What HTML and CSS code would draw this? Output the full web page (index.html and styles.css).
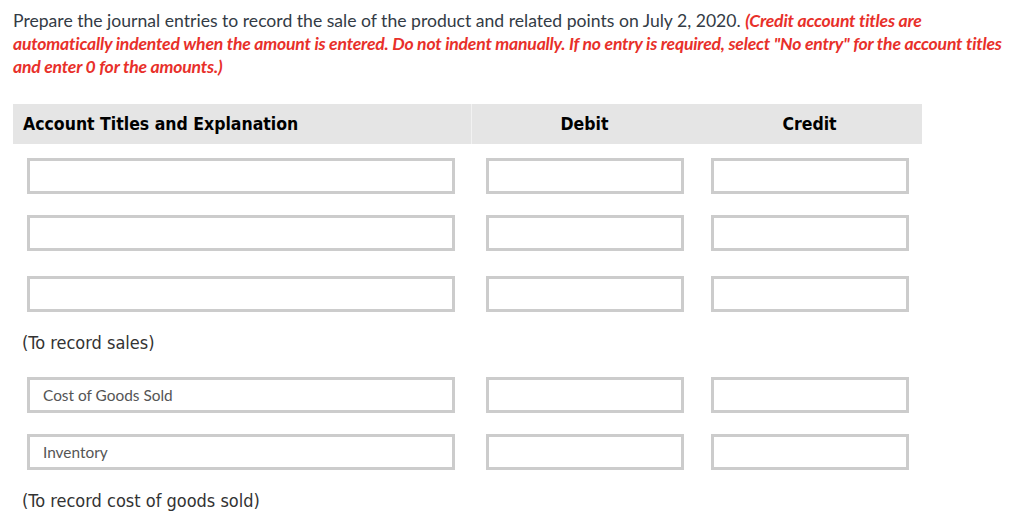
FILE: index.html
```html
<!DOCTYPE html>
<html>
<head>
<meta charset="utf-8">
<link rel="stylesheet" href="styles.css">
</head>
<body>
<div class="page">
  <p class="prompt">Prepare the journal entries to record the sale of the product and related points on July 2, 2020. <span class="note">(Credit account titles are automatically indented when the amount is entered. Do not indent manually. If no entry is required, select "No entry" for the account titles and enter 0 for the amounts.)</span></p>

  <div class="journal">
    <div class="head">
      <div class="hcell hcell-title">Account Titles and Explanation</div>
      <div class="hcell hcell-num">Debit</div>
      <div class="hcell hcell-num">Credit</div>
    </div>

    <div class="row row-1">
      <div class="cell"><div class="field field-title"></div></div>
      <div class="cell"><div class="field field-num"></div></div>
      <div class="cell"><div class="field field-num"></div></div>
    </div>
    <div class="row row-2">
      <div class="cell"><div class="field field-title"></div></div>
      <div class="cell"><div class="field field-num"></div></div>
      <div class="cell"><div class="field field-num"></div></div>
    </div>
    <div class="row row-3">
      <div class="cell"><div class="field field-title"></div></div>
      <div class="cell"><div class="field field-num"></div></div>
      <div class="cell"><div class="field field-num"></div></div>
    </div>
    <div class="explain explain-1">(To record sales)</div>

    <div class="row row-4">
      <div class="cell"><div class="field field-title">Cost of Goods Sold</div></div>
      <div class="cell"><div class="field field-num"></div></div>
      <div class="cell"><div class="field field-num"></div></div>
    </div>
    <div class="row row-5">
      <div class="cell"><div class="field field-title">Inventory</div></div>
      <div class="cell"><div class="field field-num"></div></div>
      <div class="cell"><div class="field field-num"></div></div>
    </div>
    <div class="explain explain-2">(To record cost of goods sold)</div>
  </div>
</div>
</body>
</html>
```

FILE: styles.css
```css
html, body {
  margin: 0;
  padding: 0;
  background: #ffffff;
}

.page {
  padding: 9px 13px 0 13px;
}

.prompt {
  margin: 0;
  max-width: 995px;
  font-family: Lato, "Open Sans", sans-serif;
  font-size: 17.6px;
  line-height: 23px;
  color: #333b45;
}

.note {
  color: #e8302a;
  font-weight: 700;
  font-style: italic;
  letter-spacing: -0.2px;
}

.journal {
  margin-top: 26px;
  width: 909px;
}

.head {
  display: grid;
  grid-template-columns: 459px 225px 225px;
  height: 40px;
  background: #e5e5e5;
  font-family: "DejaVu Sans Condensed", "DejaVu Sans", sans-serif;
  font-weight: 700;
  font-size: 17.5px;
  color: #000;
}

.hcell {
  display: flex;
  align-items: center;
}

.hcell-title {
  padding-left: 10px;
  border-right: 1px solid #f2f2f2;
}

.hcell-num {
  justify-content: center;
}

.row {
  display: grid;
  grid-template-columns: 459px 225px 225px;
}

.row-1 { margin-top: 14px; }
.row-2 { margin-top: 21px; }
.row-3 { margin-top: 25px; }
.row-4 { margin-top: 24px; }
.row-5 { margin-top: 21px; }

.cell {
  padding-left: 14px;
}

.field {
  box-sizing: border-box;
  height: 36px;
  border: 3px solid #cccccc;
  background: #ffffff;
  display: flex;
  align-items: center;
  padding-left: 13px;
  font-family: Lato, "Open Sans", sans-serif;
  font-size: 15.4px;
  color: #555555;
}

.field-title {
  width: 428px;
}

.field-num {
  width: 198px;
}

.explain {
  font-family: "DejaVu Sans Condensed", "DejaVu Sans", sans-serif;
  font-size: 18px;
  line-height: 20px;
  color: #333333;
  padding-left: 9px;
}

.explain-1 { margin-top: 21px; }
.explain-2 { margin-top: 21px; }
```
